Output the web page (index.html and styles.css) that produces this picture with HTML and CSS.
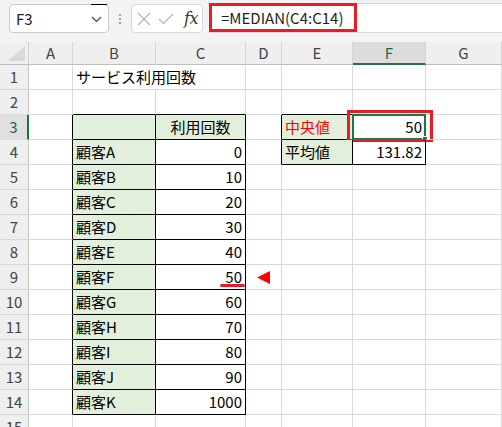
FILE: index.html
```html
<!DOCTYPE html>
<html lang="ja">
<head>
<meta charset="utf-8">
<title>MEDIAN</title>
<link rel="stylesheet" href="styles.css">
</head>
<body>
<div class="topbar">
  <div class="namebox"><span>F3</span>
    <svg class="chev" width="11" height="7" viewBox="0 0 11 7"><path d="M1 1 L5.5 5.5 L10 1" fill="none" stroke="#444" stroke-width="1.2"/></svg>
  </div>
  <div class="dots"><i></i><i></i><i></i></div>
  <div class="fxbox">
    <svg class="ico-x" width="14" height="14" viewBox="0 0 14 14"><path d="M1 1 L13 13 M13 1 L1 13" stroke="#b4b4b4" stroke-width="1.2" fill="none"/></svg>
    <svg class="ico-ok" width="16" height="12" viewBox="0 0 16 12"><path d="M1 6 L5.5 10.5 L15 1" stroke="#b4b4b4" stroke-width="1.2" fill="none"/></svg>
    <span class="fx">fx</span>
  </div>
  <div class="formula"><span class="fbox">=MEDIAN(C4:C14)</span></div>
</div>

<div class="sheet">
  <div class="corner"><span class="tri"></span></div>
  <div class="ch">A</div><div class="ch">B</div><div class="ch">C</div><div class="ch">D</div><div class="ch">E</div><div class="ch sel">F</div><div class="ch">G</div>

  <div class="rh">1</div><div class="c"></div><div class="c nob">サービス利用回数</div><div class="c"></div><div class="c"></div><div class="c"></div><div class="c"></div><div class="c"></div>

  <div class="rh">2</div><div class="c"></div><div class="c kb"></div><div class="c kb"></div><div class="c"></div><div class="c kb"></div><div class="c kb"></div><div class="c"></div>

  <div class="rh sel">3</div><div class="c kr"></div><div class="c t g"></div><div class="c t g ctr">利用回数</div><div class="c kr"></div><div class="c t g red">中央値</div><div class="c t num active">50<span class="selbox"></span><span class="handle"></span><span class="redbox"></span></div><div class="c"></div>

  <div class="rh">4</div><div class="c kr"></div><div class="c t g">顧客A</div><div class="c t num">0</div><div class="c kr"></div><div class="c t g">平均値</div><div class="c t num">131.82</div><div class="c"></div>

  <div class="rh">5</div><div class="c kr"></div><div class="c t g">顧客B</div><div class="c t num">10</div><div class="c"></div><div class="c"></div><div class="c"></div><div class="c"></div>

  <div class="rh">6</div><div class="c kr"></div><div class="c t g">顧客C</div><div class="c t num">20</div><div class="c"></div><div class="c"></div><div class="c"></div><div class="c"></div>

  <div class="rh">7</div><div class="c kr"></div><div class="c t g">顧客D</div><div class="c t num">30</div><div class="c"></div><div class="c"></div><div class="c"></div><div class="c"></div>

  <div class="rh">8</div><div class="c kr"></div><div class="c t g">顧客E</div><div class="c t num">40</div><div class="c"></div><div class="c"></div><div class="c"></div><div class="c"></div>

  <div class="rh">9</div><div class="c kr"></div><div class="c t g">顧客F</div><div class="c t num mark">50<span class="uline"></span></div><div class="c arrow"><svg width="13" height="13" viewBox="0 0 13 13"><path d="M0 6.5 L13 0 L13 13 Z" fill="#f00"/></svg></div><div class="c"></div><div class="c"></div><div class="c"></div>

  <div class="rh">10</div><div class="c kr"></div><div class="c t g">顧客G</div><div class="c t num">60</div><div class="c"></div><div class="c"></div><div class="c"></div><div class="c"></div>

  <div class="rh">11</div><div class="c kr"></div><div class="c t g">顧客H</div><div class="c t num">70</div><div class="c"></div><div class="c"></div><div class="c"></div><div class="c"></div>

  <div class="rh">12</div><div class="c kr"></div><div class="c t g">顧客I</div><div class="c t num">80</div><div class="c"></div><div class="c"></div><div class="c"></div><div class="c"></div>

  <div class="rh">13</div><div class="c kr"></div><div class="c t g">顧客J</div><div class="c t num">90</div><div class="c"></div><div class="c"></div><div class="c"></div><div class="c"></div>

  <div class="rh">14</div><div class="c kr"></div><div class="c t g">顧客K</div><div class="c t num">1000</div><div class="c"></div><div class="c"></div><div class="c"></div><div class="c"></div>

  <div class="rh">15</div><div class="c"></div><div class="c"></div><div class="c"></div><div class="c"></div><div class="c"></div><div class="c"></div><div class="c"></div>
</div>
</body>
</html>
```

FILE: styles.css
```css
* { box-sizing: border-box; margin: 0; padding: 0; }
html, body { width: 502px; height: 427px; overflow: hidden; background: #fff; }
body { font-family: "Noto Sans CJK JP", "Noto Sans", sans-serif; font-size: 15px; color: #000; }

.topbar { height: 42px; background: #f3f3f3; display: flex; align-items: flex-start; padding-top: 3px; }
.namebox { position: relative; margin-left: 9px; margin-top: 1px; width: 100px; height: 29px; background: #fff; border: 1px solid #cacaca; border-radius: 4px; display: flex; align-items: center; justify-content: space-between; padding: 0 6px 0 6px; font-size: 15px; color: #222; line-height: 1; }
.namebox::before { content: ""; position: absolute; top: -1px; left: 81px; width: 16px; height: 1px; background: #000; }
.chev { margin-top: 2px; }
.dots { width: 22px; height: 29px; display: flex; flex-direction: column; align-items: center; justify-content: center; gap: 2px; margin-top: 1px; }
.dots i { display: block; width: 2px; height: 2px; background: #8a8a8a; border-radius: 1px; }
.fxbox { width: 72px; height: 29px; margin-top: 1px; background: #fff; border: 1px solid #d8d8d8; border-radius: 4px; display: flex; align-items: center; padding-left: 5px; }
.ico-x { margin-right: 7px; }
.ico-ok { margin-right: 10px; }
.fx { font-family: "DejaVu Serif", "Liberation Serif", serif; font-style: italic; font-size: 16px; color: #333; letter-spacing: -0.5px; }
.formula { flex: 1; margin-left: 6px; height: 30px; background: #fff; border-top: 1px solid #d6d6d6; border-bottom: 1px solid #d6d6d6; }
.fbox { display: inline-flex; align-items: center; height: 29px; width: 148px; margin-top: -1px; border: 3px solid #e81c24; padding-left: 9px; font-size: 15px; color: #1f1f1f; }

.sheet { display: grid; grid-template-columns: 29px 44px 83px 90px 36px 71px 73px 76px; grid-template-rows: 23px; grid-auto-rows: 25px; }
.corner { position: relative; background: #efefef; border-right: 1px solid #d0d0d0; border-bottom: 1px solid #bdbdbd; }
.tri { position: absolute; right: 3px; bottom: 3px; width: 0; height: 0; border-left: 17px solid transparent; border-bottom: 15px solid #d9d9d9; }
.ch { background: #efefef; border-right: 1px solid #d4d4d4; border-bottom: 1px solid #bdbdbd; text-align: center; line-height: 22px; color: #444; font-size: 15px; }
.ch.sel { background: #dcdcdc; color: #1e6b41; border-bottom: 2px solid #217346; }
.rh { background: #efefef; border-right: 1px solid #c6c6c6; border-bottom: 1px solid #dadada; text-align: center; line-height: 24px; color: #444; font-size: 15px; }
.rh.sel { background: #e0e0e0; color: #1e6b41; border-right: 2px solid #217346; }

.c { position: relative; border-right: 1px solid #dadada; border-bottom: 1px solid #dadada; line-height: 24px; padding: 0 3px; white-space: nowrap; font-size: 15px; }
.nob { border-right-color: transparent; }
.kb { border-bottom-color: #000; }
.kr { border-right-color: #000; }
.t { border-right-color: #000; border-bottom-color: #000; }
.g { background: #e2efda; }
.ctr { text-align: center; }
.num { text-align: right; padding-right: 3px; }
.red { color: #f00; }

.selbox { position: absolute; left: -1px; top: -1px; right: -1px; bottom: -1px; border: 2px solid #217346; }
.handle { position: absolute; right: -3px; bottom: -3px; width: 6px; height: 6px; background: #217346; border: 1px solid #fff; }
.redbox { position: absolute; left: -6px; top: -5px; width: 86px; height: 32px; border: 3px solid #e81c24; }
.uline { position: absolute; left: auto; right: 0; width: 25px; bottom: 2px; height: 3px; background: #e81c24; border-radius: 2px; }
.arrow { display: flex; align-items: center; padding-left: 11px; }
.arrow svg { margin-top: 1px; }
```
